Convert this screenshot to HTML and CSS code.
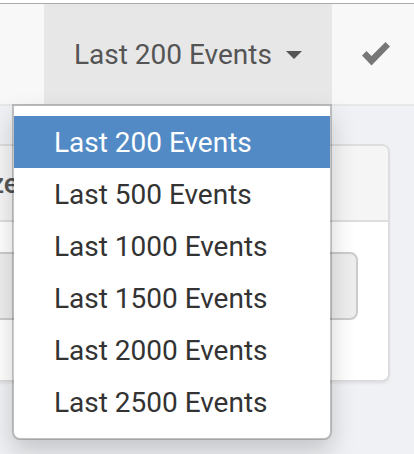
FILE: index.html
```
<!DOCTYPE html>
<html lang="en">
<head>
<meta charset="utf-8">
<title>Events</title>
<link rel="stylesheet" href="styles.css">
</head>
<body>
<nav class="navbar">
  <div class="dropdown">
    <button class="dropdown-toggle" type="button" aria-haspopup="true" aria-expanded="true">Last 200 Events<span class="caret"></span></button>
    <ul class="dropdown-menu">
      <li><a class="active" href="#200">Last 200 Events</a></li>
      <li><a href="#500">Last 500 Events</a></li>
      <li><a href="#1000">Last 1000 Events</a></li>
      <li><a href="#1500">Last 1500 Events</a></li>
      <li><a href="#2000">Last 2000 Events</a></li>
      <li><a href="#2500">Last 2500 Events</a></li>
    </ul>
  </div>
  <button class="confirm" type="button" aria-label="Confirm">
    <svg width="30" height="24" viewBox="0 0 30 24" aria-hidden="true"><path d="M0 13.5 4.5 9 9.5 14 23.5 0 28 4.5 9.5 23.5Z" fill="#777"/></svg>
  </button>
</nav>
<main class="content">
  <section class="panel">
    <label class="panel-heading" for="field">ze</label>
    <div class="panel-body"><input class="field" id="field" type="text" disabled></div>
  </section>
</main>
</body>
</html>
```
FILE: styles.css
```
* { box-sizing: border-box; }

html {
  min-height: 100%;
  overflow: hidden;
  background: #eff1f4;
}

body {
  margin: 0;
  border-top: 3px solid #fff;
  color: #333;
  font: 28px/40px Roboto, sans-serif;
}

button {
  border: 0;
  font: inherit;
  cursor: pointer;
}

.navbar {
  display: flex;
  padding-left: 44px;
  border-top: 1px solid #aaa;
  border-bottom: 2px solid #e7e7e7;
  background: #f8f8f8;
}

.dropdown {
  position: relative;
  flex: none;
}

.dropdown-toggle {
  display: flex;
  align-items: center;
  height: 100px;
  padding: 2px 30px 0;
  background: #e7e7e7;
  color: #555;
  white-space: nowrap;
}

.caret {
  margin-left: 14px;
  border-top: 8px solid;
  border-right: 8px solid transparent;
  border-left: 8px solid transparent;
}

.dropdown-menu {
  position: absolute;
  z-index: 10;
  top: 100%;
  right: 0;
  width: 320px;
  margin: 0;
  padding: 10px 0;
  border: 2px solid rgba(0, 0, 0, .2);
  border-radius: 0 0 8px 8px;
  background: #fff;
  background-clip: padding-box;
  box-shadow: 0 12px 24px rgba(0, 0, 0, .175);
  list-style: none;
}

.dropdown-menu a {
  display: block;
  padding: 7px 40px 5px;
  color: #333;
  text-decoration: none;
  white-space: nowrap;
}

.dropdown-menu .active {
  background: #528ac6;
  color: #fff;
}

.confirm {
  display: flex;
  align-items: center;
  padding: 0 30px;
  background: transparent;
}

.content {
  padding: 38px 24px 72px 0;
}

.panel {
  margin-left: -60px;
  border: 2px solid #ddd;
  border-radius: 8px;
  background: #fff;
  box-shadow: 0 2px 2px rgba(0, 0, 0, .05);
}

.panel-heading {
  display: block;
  padding: 18px 48px 16px;
  border-bottom: 2px solid #ddd;
  border-radius: 6px 6px 0 0;
  background: #f5f5f5;
  color: #555;
  font-weight: 500;
}

.panel-body {
  padding: 30px 30px 60px;
}

.field {
  display: block;
  width: 100%;
  height: 68px;
  border: 2px solid #ccc;
  border-radius: 8px;
  background: #eee;
  font: inherit;
}
```
